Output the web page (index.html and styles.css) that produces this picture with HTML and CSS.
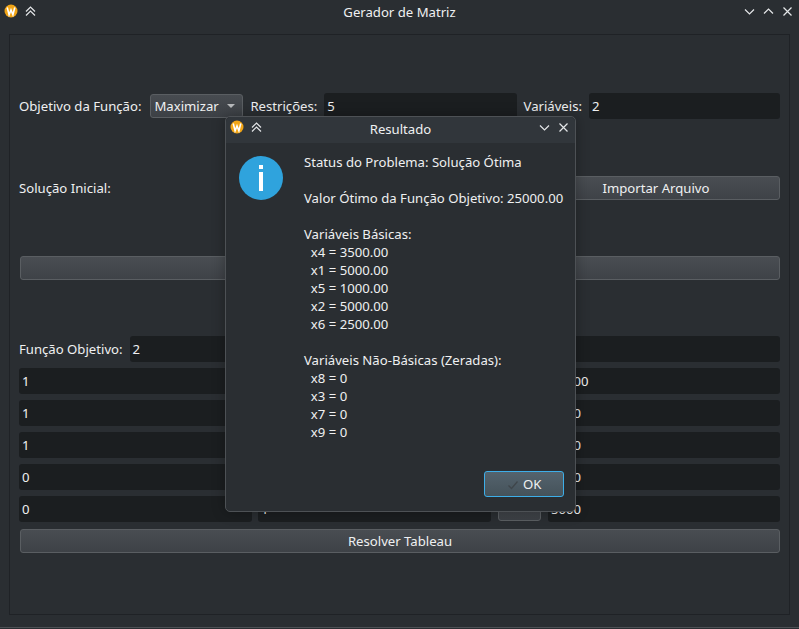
FILE: index.html
```html
<!DOCTYPE html>
<html lang="pt-BR">
<head>
  <meta charset="UTF-8">
  <title>Gerador de Matriz</title>
  <link rel="stylesheet" href="styles.css">
</head>
<body>
  <div class="window">
    <div class="titlebar">
      <div class="titleLeft">
        <svg class="appIcon" width="18" height="18" viewBox="0 0 18 18"><circle cx="9" cy="9" r="6.5" fill="#f2a516"/><path d="M5.2 5.5 L7.1 12.8 L9 8 L10.9 12.8 L12.8 5.5" fill="none" stroke="#fff" stroke-width="1.6"/></svg>
        <svg class="winIcon" width="11" height="11" viewBox="0 0 11 11"><path d="M1 5.5 L5.5 1 L10 5.5 M1 9.5 L5.5 5 L10 9.5" fill="none" stroke="#e4e6e8" stroke-width="1.2"/></svg>
      </div>
      <div class="title">Gerador de Matriz</div>
      <div class="titleRight">
        <svg class="winIcon" width="11" height="11" viewBox="0 0 11 11"><path d="M1 3.5 L5.5 8 L10 3.5" fill="none" stroke="#e4e6e8" stroke-width="1.2"/></svg>
        <svg class="winIcon" width="11" height="11" viewBox="0 0 11 11"><path d="M1 7.5 L5.5 3 L10 7.5" fill="none" stroke="#e4e6e8" stroke-width="1.2"/></svg>
        <svg class="winIcon" width="11" height="11" viewBox="0 0 11 11"><path d="M1.5 1.5 L9.5 9.5 M9.5 1.5 L1.5 9.5" fill="none" stroke="#e4e6e8" stroke-width="1.2"/></svg>
      </div>
    </div>

    <div class="frame">
      <div class="row topRow">
        <span class="label">Objetivo da Função:</span>
        <div class="combo comboMain">Maximizar <span class="arrow"></span></div>
        <span class="label">Restrições:</span>
        <div class="input grow">5</div>
        <span class="label">Variáveis:</span>
        <div class="input varInput">2</div>
      </div>

      <div class="row solRow">
        <span class="label solLabel">Solução Inicial:</span>
        <div class="button importBtn">Importar Arquivo</div>
      </div>

      <div class="button wideBtn"></div>

      <div class="row objRow">
        <span class="label">Função Objetivo:</span>
        <div class="input grow">2</div>
        <div class="input grow"></div>
      </div>

      <div class="matrix">
        <div class="input">1</div><div class="input"></div><div class="combo comboCell"></div><div class="input">10000</div>
        <div class="input">1</div><div class="input"></div><div class="combo comboCell"></div><div class="input">5000</div>
        <div class="input">1</div><div class="input"></div><div class="combo comboCell"></div><div class="input">5000</div>
        <div class="input">0</div><div class="input"></div><div class="combo comboCell"></div><div class="input">5000</div>
        <div class="input">0</div><div class="input">1</div><div class="combo comboCell"></div><div class="input">5000</div>
      </div>

      <div class="button solveBtn">Resolver Tableau</div>
    </div>
  </div>

  <div class="dialog">
    <div class="dialogBar">
      <div class="titleLeft">
        <svg class="appIcon" width="18" height="18" viewBox="0 0 18 18"><circle cx="9" cy="9" r="6.5" fill="#f2a516"/><path d="M5.2 5.5 L7.1 12.8 L9 8 L10.9 12.8 L12.8 5.5" fill="none" stroke="#fff" stroke-width="1.6"/></svg>
        <svg class="winIcon" width="11" height="11" viewBox="0 0 11 11"><path d="M1 5.5 L5.5 1 L10 5.5 M1 9.5 L5.5 5 L10 9.5" fill="none" stroke="#e4e6e8" stroke-width="1.2"/></svg>
      </div>
      <div class="title">Resultado</div>
      <div class="titleRight">
        <svg class="winIcon" width="11" height="11" viewBox="0 0 11 11"><path d="M1 3.5 L5.5 8 L10 3.5" fill="none" stroke="#e4e6e8" stroke-width="1.2"/></svg>
        <svg class="winIcon" width="11" height="11" viewBox="0 0 11 11"><path d="M1.5 1.5 L9.5 9.5 M9.5 1.5 L1.5 9.5" fill="none" stroke="#e4e6e8" stroke-width="1.2"/></svg>
      </div>
    </div>
    <div class="dialogBody">
      <svg class="infoIcon" width="44" height="44" viewBox="0 0 44 44"><circle cx="22" cy="22" r="22" fill="#2fa3dd"/><rect x="20" y="9" width="4" height="4" fill="#fff"/><rect x="20" y="16" width="4" height="19" fill="#fff"/></svg>
      <pre class="message">Status do Problema: Solução Ótima

Valor Ótimo da Função Objetivo: 25000.00

Variáveis Básicas:
  x4 = 3500.00
  x1 = 5000.00
  x5 = 1000.00
  x2 = 5000.00
  x6 = 2500.00

Variáveis Não-Básicas (Zeradas):
  x8 = 0
  x3 = 0
  x7 = 0
  x9 = 0</pre>
    </div>
    <div class="dialogFoot">
      <div class="button okBtn">
        <svg width="12" height="12" viewBox="0 0 12 12"><path d="M1.5 6.5 L4.5 9.5 L10.5 2.5" fill="none" stroke="#3f464b" stroke-width="1.3"/></svg>
        OK
      </div>
    </div>
  </div>
</body>
</html>
```

FILE: styles.css
```css
*{
  box-sizing: border-box;
}

body{
  margin: 0;
  width: 799px;
  height: 629px;
  overflow: hidden;
  position: relative;
  background-color: #2a2e32;
  color: #eff0f1;
  font-family: 'Noto Sans', sans-serif;
  font-size: 13.15px;
}

.window{
  height: 628px;
  display: flex;
  flex-direction: column;
  border-bottom: 1px solid #4d5155;
}

.titlebar{
  height: 34px;
  flex: none;
  padding: 0 6px 12px 2px;
  display: flex;
  align-items: center;
  position: relative;
}

.title{
  position: absolute;
  left: 0;
  right: 0;
  top: 0;
  line-height: 24px;
  text-align: center;
}

.titleLeft, .titleRight{
  display: flex;
  align-items: center;
}

.titleLeft{
  gap: 5px;
}

.titleRight{
  margin-left: auto;
  gap: 8px;
}

.frame{
  margin: 0 9px;
  height: 581px;
  border: 1px solid #1f2226;
  padding: 58px 9px 0 9px;
  display: flex;
  flex-direction: column;
}

.row{
  display: flex;
  align-items: center;
}

.topRow{
  height: 26px;
  gap: 7px;
}

.label{
  white-space: nowrap;
}

.input{
  height: 26px;
  line-height: 26px;
  padding: 0 3px;
  background-color: #1b1e20;
  border-radius: 3px;
}

.grow{
  flex: 1;
}

.varInput{
  width: 191px;
}

.combo{
  height: 24px;
  line-height: 22px;
  border: 1px solid #5a5e62;
  border-radius: 3px;
  background: linear-gradient(#474b50, #3c4045);
}

.comboMain{
  width: 93px;
  padding-left: 3px;
  position: relative;
  margin-left: 2px;
}

.arrow{
  position: absolute;
  right: 7px;
  top: 9px;
  border-left: 4px solid transparent;
  border-right: 4px solid transparent;
  border-top: 4px solid #b8babc;
}

.solRow{
  margin-top: 56px;
  height: 26px;
  justify-content: space-between;
}

.button{
  border: 1px solid #5a5e62;
  border-radius: 3px;
  background: linear-gradient(#494d52, #3e4247);
  text-align: center;
  height: 24px;
  line-height: 22px;
}

.importBtn{
  width: 248px;
}

.wideBtn{
  margin: 55px 0 0 1px;
}

.objRow{
  margin-top: 56px;
  gap: 6px;
}

.objRow .label{
  margin-right: 1px;
}

.matrix{
  margin-top: 6px;
  display: grid;
  grid-template-columns: 233px 233px 44px 233px;
  gap: 6px;
  align-items: center;
}

.matrix .input:nth-child(4n){
  margin-left: 1px;
}

.comboCell{
  margin-left: 1px;
}

.solveBtn{
  margin: 7px 0 0 1px;
}

.dialog{
  position: absolute;
  left: 225px;
  top: 116px;
  width: 351px;
  height: 396px;
  background-color: #2a2e32;
  border: 1px solid #4d5155;
  border-radius: 5px;
  box-shadow: 0 0 14px rgba(0, 0, 0, 0.3);
  display: flex;
  flex-direction: column;
}

.dialogBar{
  height: 26px;
  flex: none;
  padding: 0 6px 6px 2px;
  background-color: #31363b;
  border-radius: 5px 5px 0 0;
  display: flex;
  align-items: center;
  position: relative;
}

.dialogBody{
  flex: 1;
  padding: 10px 0 0 13px;
  display: flex;
}

.infoIcon{
  flex: none;
  margin-top: 3px;
}

.message{
  margin: 0 0 0 21px;
  font: inherit;
  line-height: 18px;
}

.dialogFoot{
  display: flex;
  justify-content: flex-end;
  padding: 0 11px 14px 0;
}

.okBtn{
  width: 80px;
  height: 26px;
  line-height: 24px;
  border-color: #3daee9;
  background: linear-gradient(#54636d, #45525a);
}

.okBtn svg{
  vertical-align: -2px;
  margin-right: 1px;
}
```
